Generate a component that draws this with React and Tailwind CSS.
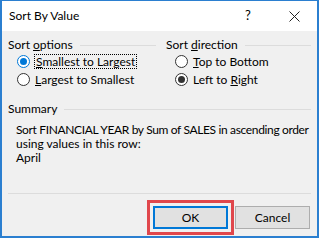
import React from "react";

const Radio = ({ checked, focused }) => (
  <span
    className={`w-[13px] h-[13px] rounded-full border bg-white flex items-center justify-center shrink-0 ${
      focused ? "border-[#0078d7]" : "border-[#333333]"
    }`}
  >
    {checked && (
      <span
        className={`w-[7px] h-[7px] rounded-full ${
          focused ? "bg-[#0078d7]" : "bg-[#333333]"
        }`}
      />
    )}
  </span>
);

const GroupTitle = ({ children }) => (
  <div className="flex items-center h-[16px]">
    <span>{children}</span>
    <span className="flex-1 h-px bg-[#dcdcdc] ml-[7px]" />
  </div>
);

export default function App() {
  return (
    <div
      className="w-[319px] h-[238px] flex flex-col border-l-2 border-r-2 border-b-2 border-t border-[#2b7fd0] text-[12px] text-black overflow-hidden"
      style={{ fontFamily: 'Lato, "Noto Sans", sans-serif' }}
    >
      {/* title bar */}
      <div className="h-[30px] bg-white flex items-center pl-[7px] shrink-0">
        <span className="flex-1">Sort By Value</span>
        <span className="w-[46px] text-center text-[13px]">?</span>
        <span className="w-[46px] flex justify-center">
          <svg width="11" height="11" viewBox="0 0 11 11">
            <path d="M0.5 0.5 L10.5 10.5 M10.5 0.5 L0.5 10.5" stroke="#222" strokeWidth="1" />
          </svg>
        </span>
      </div>

      {/* body */}
      <div className="flex-1 bg-[#f0f0f0] flex flex-col px-[6px] pt-[6px]">
        <div className="flex gap-[10px]">
          <div className="w-[148px] flex flex-col">
            <GroupTitle>
              Sort <u>o</u>ptions
            </GroupTitle>
            <div className="flex flex-col gap-[3px] pl-[9px] pt-[1px]">
              <label className="flex items-center gap-[4px] h-[15px]">
                <Radio checked focused />
                <span className="border border-dotted border-black px-[1px] leading-[13px]">
                  <u>S</u>mallest to Largest
                </span>
              </label>
              <label className="flex items-center gap-[5px] h-[15px]">
                <Radio />
                <span>
                  <u>L</u>argest to Smallest
                </span>
              </label>
            </div>
          </div>
          <div className="flex-1 flex flex-col">
            <GroupTitle>
              Sort <u>d</u>irection
            </GroupTitle>
            <div className="flex flex-col gap-[3px] pl-[9px] pt-[1px]">
              <label className="flex items-center gap-[5px] h-[15px]">
                <Radio />
                <span>
                  <u>T</u>op to Bottom
                </span>
              </label>
              <label className="flex items-center gap-[5px] h-[15px]">
                <Radio checked />
                <span>
                  Left to <u>R</u>ight
                </span>
              </label>
            </div>
          </div>
        </div>

        <div className="mt-[14px]">
          <GroupTitle>Summary</GroupTitle>
        </div>
        <div className="pl-[8px] pt-[6px] leading-[14px] whitespace-nowrap">
          <div className="tracking-[-0.35px]">
            Sort FINANCIAL YEAR by Sum of SALES in ascending order
          </div>
          <div>using values in this row:</div>
          <div>April</div>
        </div>

        <div className="mt-auto border-t border-[#dcdcdc] flex justify-end items-center gap-[7px] pt-[12px] pb-[7px]">
          <button className="relative w-[75px] h-[23px] bg-[#e1e1e1] border-2 border-[#0078d7]">
            OK
            <span className="absolute -inset-[8px] border-[3px] border-[#e0474c] pointer-events-none" />
          </button>
          <button className="w-[75px] h-[23px] bg-[#e1e1e1] border border-[#adadad] mr-[1px]">
            Cancel
          </button>
        </div>
      </div>
    </div>
  );
}
